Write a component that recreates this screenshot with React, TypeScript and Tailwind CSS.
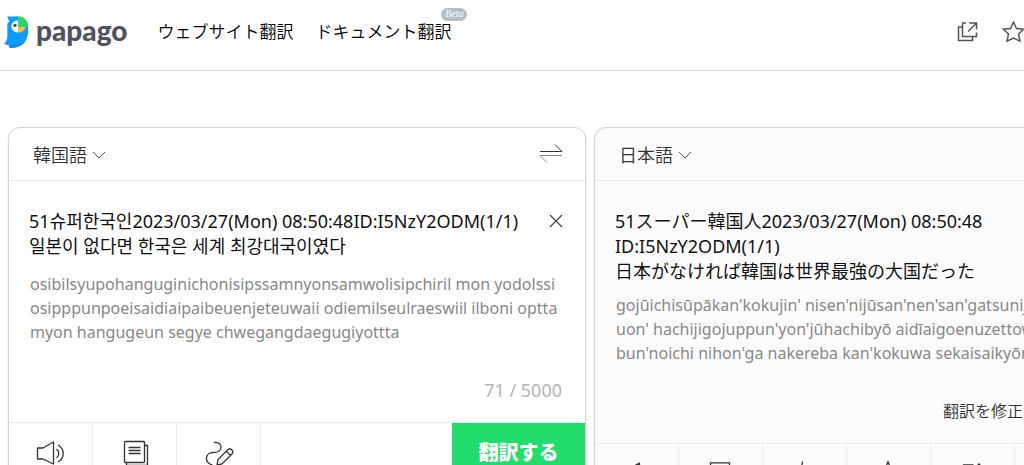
import { useState } from "react";
import type { ReactNode } from "react";

const SOURCE_TEXT = "51슈퍼한국인2023/03/27(Mon) 08:50:48ID:I5NzY2ODM(1/1)\n일본이 없다면 한국은 세계 최강대국이였다";

const SOURCE_READING = [
  "osibilsyupohanguginichonisipssamnyonsamwolisipchiril mon yodolssi",
  "osipppunpoeisaidiaipaibeuenjeteuwaii odiemilseulraeswiil ilboni optta",
  "myon hangugeun segye chwegangdaegugiyottta",
];

const TARGET_LINES = [
  "51スーパー韓国人2023/03/27(Mon) 08:50:48",
  "ID:I5NzY2ODM(1/1)",
  "日本がなければ韓国は世界最強の大国だった",
];

const TARGET_READING = [
  "gojūichisūpākan'kokujin' nisen'nijūsan'nen'san'gatsunijūnananichi m",
  "uon' hachijigojuppun'yon'jūhachibyō aidīaigoenuzettowainiōdīemu ichi",
  "bun'noichi nihon'ga nakereba kan'kokuwa sekaisaikyōnotaikokudatta",
];

function Parrot() {
  return (
    <svg width="26" height="34" viewBox="0 0 26 34" aria-hidden="true">
      <path d="M3.500 1 C7 2.200 10 1.200 14 1.200 L24 11.500 C24.500 17 24 22 21.500 26 C18.500 31 13 33 5.500 32.800 L5 30.500 L0 29 C3 26 3.700 23 3.300 18 L3.300 9 L5.500 6 C4.500 5 3.500 3 3.500 1 Z" fill="#0d9bff" />
      <path d="M21.500 26 C17.500 31 12 33 5.500 32.800 L5 30.500 C12 30 18 28.500 21.500 26 Z" fill="#1484f5" />
      <path d="M14 1.200 C20 1.200 24.300 5.500 24.300 11.800 L14 11.800 Z" fill="#2ad566" />
      <path d="M14 5.500 V17.500 C10.500 17.500 7.300 15 7.300 11.300 C7.300 8 10.300 5.500 14 5.500 Z" fill="#fff" />
      <circle cx="11" cy="10.300" r="1.600" fill="#2c4c69" />
      <path d="M14 11.800 H21.500 C21.500 15 18.500 17.500 14 17.500 Z" fill="#fbc037" />
    </svg>
  );
}

function Icon({ children }: { children: ReactNode }) {
  return (
    <svg
      width="32"
      height="32"
      viewBox="0 0 32 32"
      fill="none"
      stroke="currentColor"
      strokeWidth="1.300"
      aria-hidden="true"
    >
      {children}
    </svg>
  );
}

const Speaker = () => (
  <Icon>
    <path d="M2.500 11 H8 L18.500 5 V27 L8 22 H2.500 Z" strokeLinejoin="round" />
    <path d="M21.500 12 C24.500 14.500 24.500 18.500 21.500 21" />
    <path d="M23 8 C30 12 30 21 23 25" />
  </Icon>
);

const Dictionary = () => (
  <Icon>
    <rect x="5.500" y="4.500" width="20" height="21" rx="1" />
    <path d="M7.500 25.500 V28.500 H28.500 V8.500 H26" />
    <path d="M9.500 10.500 H21.500 M9.500 13.500 H21.500 M9.500 16.500 H21.500" />
  </Icon>
);

const Handwriting = () => (
  <Icon>
    <path d="M11 5.500 C15 4.500 18.500 7.500 18 11 C17.500 15 14 15.500 10 15.500 C6 15.500 3.500 18 3.500 21.500 C3.500 25 6 27 9.500 28" />
    <path d="M14 28 L15 22.500 L25 12.500 C26.200 11.500 28 11.800 29 13 C30.200 14.200 30.200 16 29 17 L19 27 Z M23.500 14.500 L27.500 18.500" />
  </Icon>
);

const Copy = () => (
  <Icon>
    <path d="M5.500 25.500 V4.800 H24.500 V25.500 Z M9 11.500 H21 M9 15.500 H21" />
  </Icon>
);

const Share = () => (
  <Icon>
    <path d="M13.500 3.500 L12.500 10 M12.500 10 L7 20 M12.500 10 L24 20 M4 20.500 H10 V26.500 H4 Z M21 20.500 H27 V26.500 H21 Z" />
  </Icon>
);

const Star = () => (
  <Icon>
    <path d="M15 3.800 L18.500 12.500 L27 13.200 L20.500 19 L22.500 27.500 L15 23 L7.500 27.500 L9.500 19 L3 13.200 L11.500 12.500 Z" />
  </Icon>
);

const Edit = () => (
  <Icon>
    <path d="M6.500 27.500 V6.800 H16.500 M22 6 L26 10 L15 21 H11 V17 Z" />
  </Icon>
);

const Chevron = () => (
  <svg width="14" height="8" viewBox="0 0 14 8" fill="none" stroke="#555" aria-hidden="true">
    <path d="M1 1 L7 7 L13 1" />
  </svg>
);

function ToolButton({ label, children }: { label: string; children: ReactNode }) {
  return (
    <button
      type="button"
      aria-label={label}
      className="flex h-full w-21 items-center justify-center border-r border-[#ececec] text-[#333]"
    >
      {children}
    </button>
  );
}

function LanguageButton({ name }: { name: string }) {
  return (
    <button type="button" className="flex items-center gap-[5px] text-lg leading-6 font-[350] text-[#333]">
      {name}
      <Chevron />
    </button>
  );
}

function Reading({ lines }: { lines: string[] }) {
  return (
    <p className="pl-px whitespace-nowrap text-base leading-6 text-[#888]">
      {lines.map((line) => (
        <span key={line} className="block">
          {line}
        </span>
      ))}
    </p>
  );
}

function Header() {
  return (
    <header className="flex h-[71px] items-center border-b border-[#d8d8d8] pb-1.5">
      <a href="#home" aria-label="papago" className="ml-1 flex items-center gap-1.5 text-[#50515e]">
        <Parrot />
        <span className="pb-1 font-['Lato',sans-serif] text-[28px] leading-8 font-black">papago</span>
      </a>
      <nav className="ml-[30px] flex gap-[22px] text-[17px] leading-6 font-[350] text-black">
        <a href="#website">ウェブサイト翻訳</a>
        <a href="#document" className="relative">
          ドキュメント翻訳
          <span className="absolute -top-3 -right-4 h-[13px] w-[26px] rounded-full bg-[#b5bfc6] text-center font-['Liberation_Serif',serif] text-[10px] leading-3 text-white italic">
            Beta
          </span>
        </a>
      </nav>
      <div className="ml-auto flex items-center gap-6 text-[#555]">
        <button type="button" aria-label="新しいウィンドウで開く">
          <svg width="22" height="22" viewBox="0 0 22 22" fill="none" stroke="currentColor" strokeWidth="1.500" aria-hidden="true">
            <path d="M10 2 H6.500 V15.500 H20.500 V11.500 M13 2 H20.500 V8.500 M20 2.500 L12 10.500" />
            <path d="M6.500 6 H2.500 V19.500 H16.500 V16" />
          </svg>
        </button>
        <button type="button" aria-label="お気に入り">
          <svg width="22" height="22" viewBox="0 0 22 22" fill="none" stroke="currentColor" strokeWidth="1.500" aria-hidden="true">
            <path d="M11.500 1 L14.500 7.500 L21.500 8.200 L16.500 13 L18 20.200 L11.500 17 L5 20.200 L6.500 13 L1.500 8.200 L8.500 7.500 Z" />
          </svg>
        </button>
      </div>
    </header>
  );
}

function SourcePanel() {
  const [text, setText] = useState(SOURCE_TEXT);

  return (
    <section className="overflow-hidden rounded-xl border border-[#d5d5d5] bg-white shadow-sm">
      <div className="flex h-[53px] items-center justify-between border-b border-[#e8e8e8] pt-0.5 pr-[21px] pl-6">
        <LanguageButton name="韓国語" />
        <button type="button" aria-label="言語を入れ替える" className="pb-0.5">
          <svg width="26" height="20" viewBox="0 0 26 20" fill="none" aria-hidden="true">
            <path d="M2 7.500 H24 L17 0.500" stroke="#333" />
            <path d="M24 11.500 H2 L9 18.500" stroke="#888" />
          </svg>
        </button>
      </div>

      <div className="px-5 pt-7">
        <div className="flex items-start justify-between">
          <textarea
            aria-label="翻訳する内容"
            lang="ko"
            rows={2}
            value={text}
            onChange={(e) => setText(e.target.value)}
            className="block w-[510px] resize-none overflow-hidden font-['Noto_Sans','Noto_Sans_CJK_KR',sans-serif] text-lg leading-[25px] text-[#111] outline-none"
          />
          <button type="button" aria-label="消去" onClick={() => setText("")} className="mt-1 mr-0.5">
            <svg width="14" height="16" viewBox="0 0 14 16" fill="none" stroke="#444" strokeWidth="1.200" aria-hidden="true">
              <path d="M1 2 L13 14 M13 2 L1 14" />
            </svg>
          </button>
        </div>
        <div className="mt-[13px]">
          <Reading lines={SOURCE_READING} />
        </div>
        <p className="mt-[34px] mb-5 pr-[3px] text-right text-lg leading-6 text-[#b5b5b5]">71 / 5000</p>
      </div>

      <div className="flex h-15 border-t border-[#ececec]">
        <ToolButton label="音声を聞く">
          <Speaker />
        </ToolButton>
        <ToolButton label="辞書">
          <Dictionary />
        </ToolButton>
        <ToolButton label="手書き入力">
          <Handwriting />
        </ToolButton>
        <button type="button" className="ml-auto w-[133px] bg-[#22dc6b] text-xl font-black text-white">
          翻訳する
        </button>
      </div>
    </section>
  );
}

function TargetPanel() {
  return (
    <section className="overflow-hidden rounded-xl border border-[#d5d5d5] bg-[#fcfcfc] shadow-sm">
      <div className="flex h-[53px] items-center border-b border-[#e8e8e8] pt-0.5 pl-6">
        <LanguageButton name="日本語" />
      </div>

      <div className="px-5 pt-7">
        <p className="text-lg leading-[25px] text-[#111]">
          {TARGET_LINES.map((line) => (
            <span key={line} className="block">
              {line}
            </span>
          ))}
        </p>
        <div className="mt-[9px]">
          <Reading lines={TARGET_READING} />
        </div>
        <div className="mt-[34px] mb-5 flex justify-end pr-24">
          <a href="#edit" className="text-base leading-6 font-[350] text-[#333]">
            翻訳を修正する
          </a>
        </div>
      </div>

      <div className="flex h-15 border-t border-[#ececec]">
        <ToolButton label="訳文を聞く">
          <Speaker />
        </ToolButton>
        <ToolButton label="コピー">
          <Copy />
        </ToolButton>
        <ToolButton label="共有">
          <Share />
        </ToolButton>
        <ToolButton label="保存">
          <Star />
        </ToolButton>
        <ToolButton label="編集">
          <Edit />
        </ToolButton>
      </div>
    </section>
  );
}

export default function App() {
  return (
    <div
      lang="ja"
      className="h-screen overflow-hidden bg-white font-['Noto_Sans','Noto_Sans_CJK_JP',sans-serif]"
    >
      <Header />
      {/* Both panels keep a readable width, the second one runs off narrow windows */}
      <main className="grid min-w-[1180px] grid-cols-2 items-start gap-2 px-2 pt-14">
        <SourcePanel />
        <TargetPanel />
      </main>
    </div>
  );
}
